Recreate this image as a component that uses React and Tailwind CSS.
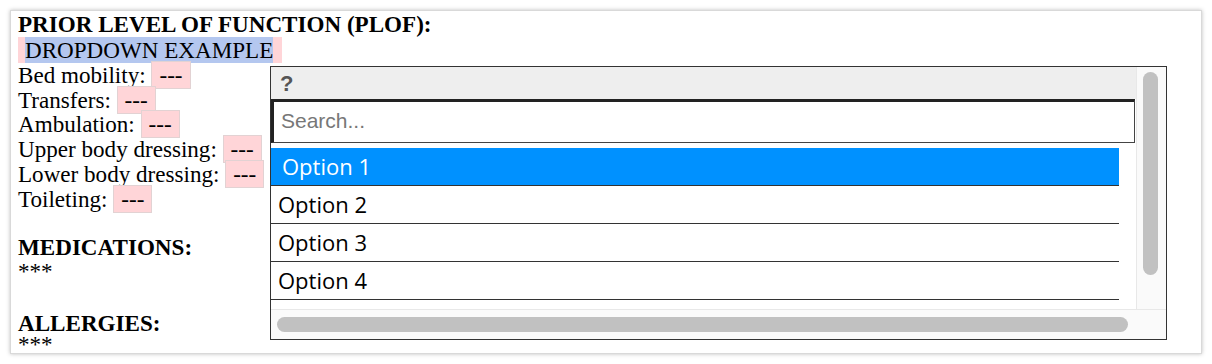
import React from "react";

function Pink({ children = "---" }) {
  return (
    <span className="bg-[#ffd5d8] border border-[#e2d2d3] px-[7px]">{children}</span>
  );
}

export default function App() {
  const options = ["Option 1", "Option 2", "Option 3", "Option 4", "Option 5"];
  return (
    <div className="w-[1212px] h-[364px] bg-white p-[10px]">
      <div className="relative h-[344px] border border-[#d9d9d9] shadow-[0_0_4px_rgba(0,0,0,0.25)] pl-[7px] pt-[1px] font-['Liberation_Serif',serif] text-[23.1px] leading-[24.8px] text-black overflow-hidden bg-white">
        <div className="font-bold">PRIOR LEVEL OF FUNCTION (PLOF):</div>
        <div>
          <span className="bg-[#ffd5d8] pl-[7px] pr-[9px] inline-block leading-[26px]">
            <span className="bg-[#b4c7ef]">DROPDOWN EXAMPLE</span>
          </span>
        </div>
        <div>Bed mobility: <Pink /></div>
        <div>Transfers: <Pink /></div>
        <div>Ambulation: <Pink /></div>
        <div>Upper body dressing: <Pink /></div>
        <div>Lower body dressing: <Pink /></div>
        <div>Toileting: <Pink /></div>
        <div className="h-[23px]" />
        <div className="font-bold">MEDICATIONS:</div>
        <div>***</div>
        <div className="h-[29px]" />
        <div className="font-bold leading-[21px]">ALLERGIES:</div>
        <div className="leading-[20px]">***</div>

        <div className="absolute left-[259px] top-[55px] w-[897px] h-[274px] border border-[#333] bg-white overflow-hidden flex flex-col">
          <div className="flex h-[242px]">
            <div className="w-[865px] overflow-hidden">
              <div className="h-[32px] bg-[#eeeeee] flex items-center pl-[9px] pt-[2px] font-['Liberation_Sans',sans-serif] font-bold text-[22px] text-[#555]">
                ?
              </div>
              <div className="h-[44px] w-[864px] border-t-[3px] border-l-[3px] border-r border-b border-t-[#222] border-l-[#222] border-r-[#444] border-b-[#444] flex items-center pl-[7px] pb-[2px] font-['Liberation_Sans',sans-serif] text-[21px] text-[#777]">
                Search...
              </div>
              <div className="mt-[5px] w-[848px] font-['Open_Sans',sans-serif] text-[22px]">
                {options.map((o, i) => (
                  <div
                    key={o}
                    className={
                      i === 0
                        ? "h-[38px] border-b border-[#333] bg-[#0091ff] text-white flex items-center pl-[11px]"
                        : "h-[38px] border-b border-[#333] text-black flex items-center pl-[7px]"
                    }
                  >
                    {o}
                  </div>
                ))}
              </div>
            </div>
            <div className="w-[30px] bg-[#fafafa] border-l border-[#e8e8e8] pt-[5px]">
              <div className="ml-[6px] w-[15px] h-[203px] rounded-full bg-[#c1c1c1]" />
            </div>
          </div>
          <div className="h-[30px] bg-[#fafafa] border-t border-[#e8e8e8] flex items-center pl-[6px]">
            <div className="w-[851px] h-[15px] rounded-full bg-[#c1c1c1]" />
          </div>
        </div>
      </div>
    </div>
  );
}
